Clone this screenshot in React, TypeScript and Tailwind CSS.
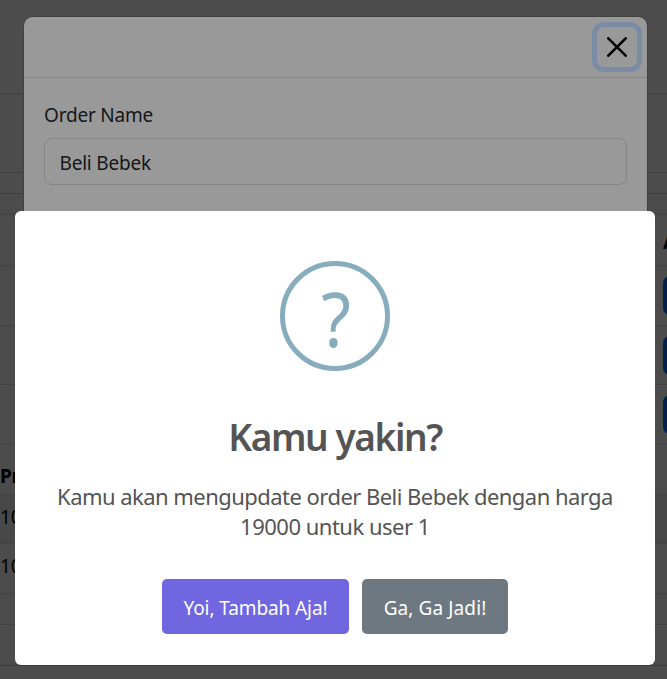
import React from "react";

type Row = { height: string; label?: string; bold?: boolean; line?: string; shade?: string; action?: string };

const rows: Row[] = [
  { height: "h-[94px]", line: "border-[#404040]" },
  { height: "h-[79px]", line: "border-[#404040]" },
  { height: "h-[21px]", line: "border-[#3e3e3e]" },
  { height: "h-[21px]" },
  { height: "h-[51px]", action: "heading" },
  { height: "h-[60px]", action: "button" },
  { height: "h-[59px]", action: "button" },
  { height: "h-[59px]", action: "button" },
  { height: "h-[51px]", label: "Price", bold: true },
  { height: "h-[49px]", label: "10000", shade: "bg-[#484848]" },
  { height: "h-[50px]", label: "10000" },
  { height: "h-[31px]" },
  { height: "h-[41px]", line: "border-[#3a3a3a]" },
];

function Page() {
  return (
    <div className="h-full w-full overflow-hidden bg-[#4c4c4c] text-[19px] leading-[30px] text-black">
      {rows.map((row, i) => (
        <div
          key={i}
          className={`flex justify-between border-b ${row.height} ${row.line ?? "border-[#434343]"} ${row.shade ?? ""}`}
        >
          <span className={row.bold ? "pt-[17px] font-bold tracking-[-0.4px]" : "pt-[7px] tracking-[-0.2px]"}>{row.label}</span>
          {row.action === "heading" && <span className="w-[4px] whitespace-nowrap pt-[12px] font-bold">A</span>}
          {row.action === "button" && (
            <span className="w-[4px] overflow-hidden pt-[10px]">
              <span className="block h-[39px] w-[70px] rounded-[7px] bg-[#00214c]" />
            </span>
          )}
        </div>
      ))}
    </div>
  );
}

function OrderModal() {
  return (
    <div className="absolute left-[23px] top-[16px] h-[600px] w-[625px] rounded-[10px] border border-[#414141] bg-[#999999] text-[#141618]">
      <div className="flex h-[61px] items-center justify-end border-b border-[#868686] pr-[5px]">
        <button className="flex h-[50px] w-[50px] items-center justify-center rounded-[12px] border-[5px] border-[#7a8ba5]" aria-label="Close">
          <svg width="20" height="20" viewBox="0 0 20 20" fill="none" stroke="#000" strokeWidth="2.6" strokeLinecap="round">
            <path d="M1.3 1.3 18.7 18.7M18.7 1.3 1.3 18.7" />
          </svg>
        </button>
      </div>
      <div className="px-[20px] pt-[22px]">
        <label className="block text-[19px] leading-[30px] tracking-[-0.2px]">Order Name</label>
        <div className="mt-[8px] flex h-[47px] items-center rounded-[8px] border border-[#868686] px-[14.5px] pt-[3px] text-[19px] tracking-[-0.2px]">
          Beli Bebek
        </div>
      </div>
    </div>
  );
}

function ConfirmDialog() {
  return (
    <div className="absolute left-[15px] top-[211px] flex h-[454px] w-[640px] flex-col items-center rounded-[6px] bg-white pt-[50px] text-[#545454]">
      <div className="flex h-[110px] w-[110px] items-center justify-center rounded-full border-[5px] border-[#87adbd] text-[74px] leading-[100px] text-[#87adbd]">
        <span className="scale-x-[0.92] pl-[3px] pt-[6px]">?</span>
      </div>
      <h2 className="mt-[39px] whitespace-nowrap text-[37px] font-semibold leading-[54px] tracking-[-1.4px]">Kamu yakin?</h2>
      <div className="mt-[17px] whitespace-nowrap text-center text-[22px] leading-[30px] tracking-[-0.54px]">
        <p>Kamu akan mengupdate order Beli Bebek dengan harga</p>
        <p className="tracking-[-0.5px]">19000 untuk user 1</p>
      </div>
      <div className="mt-[38px] flex gap-[13px] text-[19px] text-white">
        <button className="h-[55px] w-[187px] whitespace-nowrap rounded-[5px] bg-[#7066e0] pt-[4px] tracking-[-0.1px]">Yoi, Tambah Aja!</button>
        <button className="h-[55px] w-[146px] whitespace-nowrap rounded-[5px] bg-[#6e7881] pt-[4px] tracking-[0.1px]">Ga, Ga Jadi!</button>
      </div>
    </div>
  );
}

export default function App() {
  return (
    <div className="relative h-[679px] w-[667px] overflow-hidden font-['Segoe_UI','Noto_Sans',sans-serif]">
      <Page />
      <OrderModal />
      <ConfirmDialog />
    </div>
  );
}
